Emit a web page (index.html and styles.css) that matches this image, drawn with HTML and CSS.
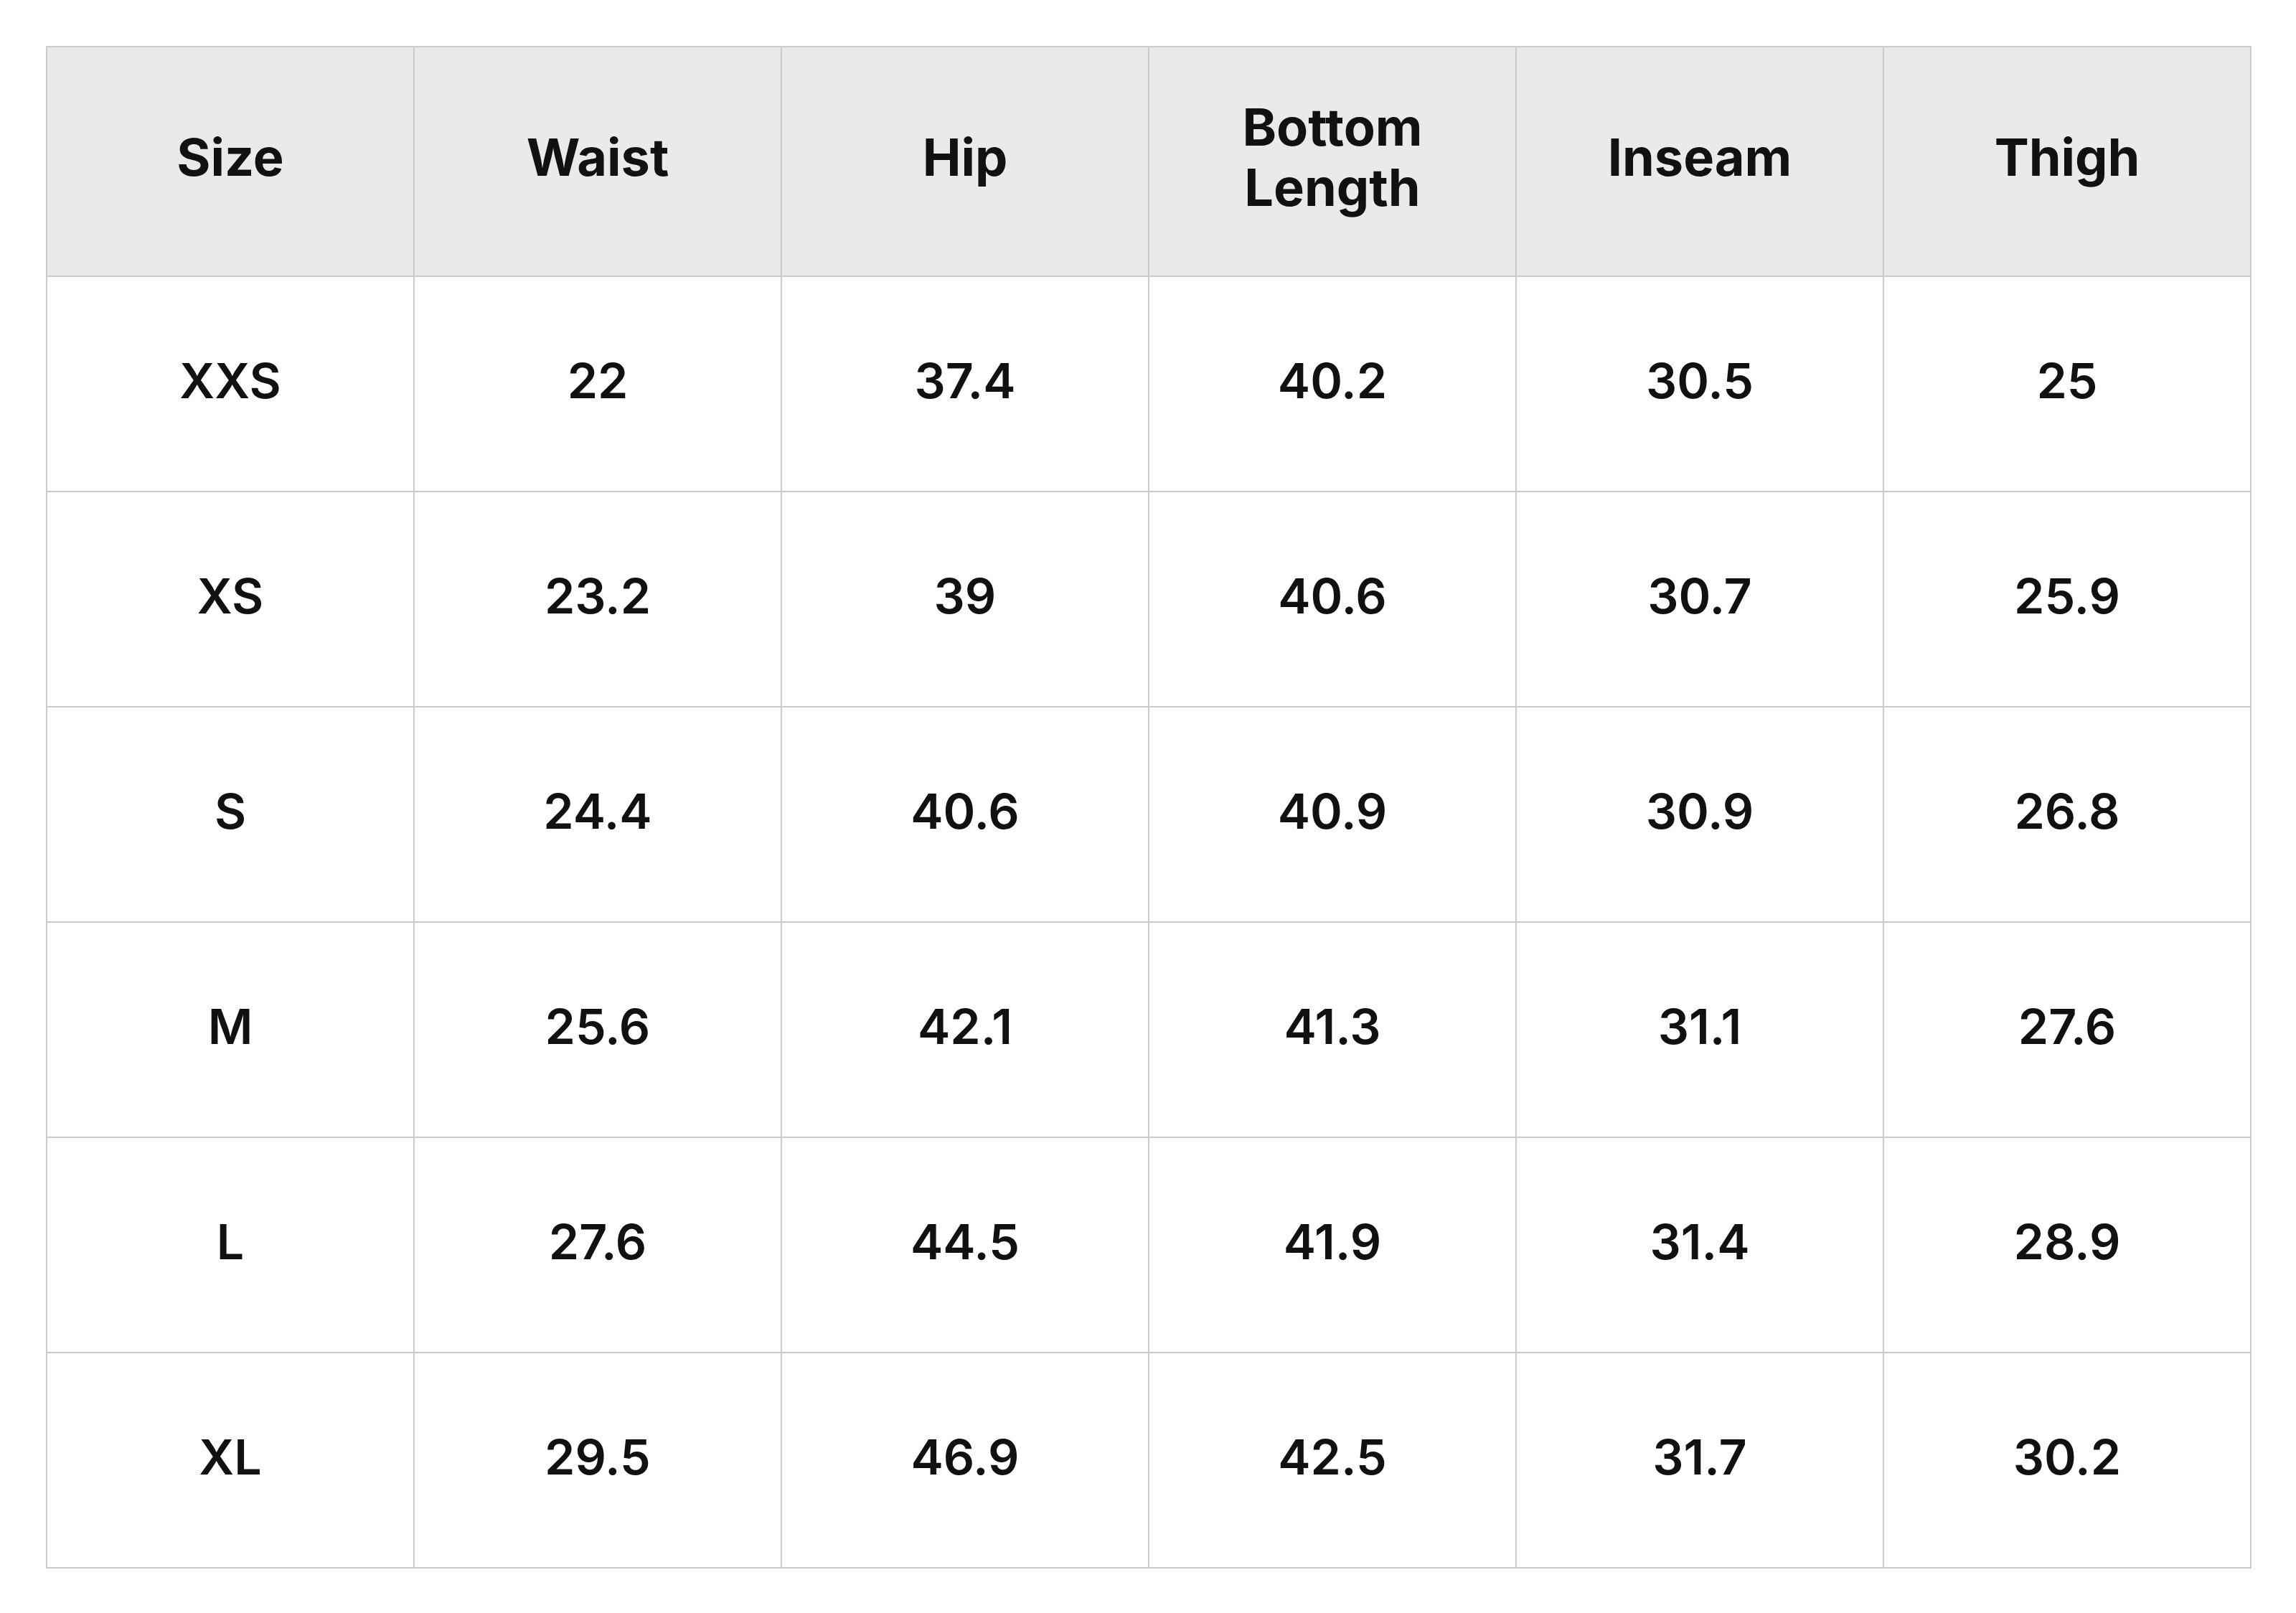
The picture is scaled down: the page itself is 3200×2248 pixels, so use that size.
FILE: index.html
```html
<!DOCTYPE html>
<html lang="en">
<head>
<meta charset="utf-8">
<title>Size Chart</title>
<link rel="stylesheet" href="styles.css">
</head>
<body>
<main class="page">
  <table class="size-table">
    <thead>
      <tr>
        <th>Size</th>
        <th>Waist</th>
        <th>Hip</th>
        <th>Bottom<br>Length</th>
        <th>Inseam</th>
        <th>Thigh</th>
      </tr>
    </thead>
    <tbody>
      <tr><td>XXS</td><td>22</td><td>37.4</td><td>40.2</td><td>30.5</td><td>25</td></tr>
      <tr><td>XS</td><td>23.2</td><td>39</td><td>40.6</td><td>30.7</td><td>25.9</td></tr>
      <tr><td>S</td><td>24.4</td><td>40.6</td><td>40.9</td><td>30.9</td><td>26.8</td></tr>
      <tr><td>M</td><td>25.6</td><td>42.1</td><td>41.3</td><td>31.1</td><td>27.6</td></tr>
      <tr><td>L</td><td>27.6</td><td>44.5</td><td>41.9</td><td>31.4</td><td>28.9</td></tr>
      <tr><td>XL</td><td>29.5</td><td>46.9</td><td>42.5</td><td>31.7</td><td>30.2</td></tr>
    </tbody>
  </table>
</main>
</body>
</html>
```

FILE: styles.css
```css
html, body {
  margin: 0;
  padding: 0;
  background: #ffffff;
}

.page {
  padding: 64px 0 0 64px;
}

.size-table {
  border-collapse: collapse;
  table-layout: fixed;
  width: 3074px;
  font-family: "Inter", "Liberation Sans", sans-serif;
  color: #111111;
}

.size-table th,
.size-table td {
  border: 2px solid #cbcbcb;
  text-align: center;
  vertical-align: middle;
  padding: 0;
}

.size-table th {
  background: #eaeaea;
  height: 306px;
  padding-bottom: 12px;
  font-size: 72px;
  font-weight: 700;
  line-height: 84px;
}

.size-table td {
  height: 290px;
  padding-bottom: 8px;
  font-size: 68px;
  font-weight: 600;
  line-height: 1.2;
}
```
